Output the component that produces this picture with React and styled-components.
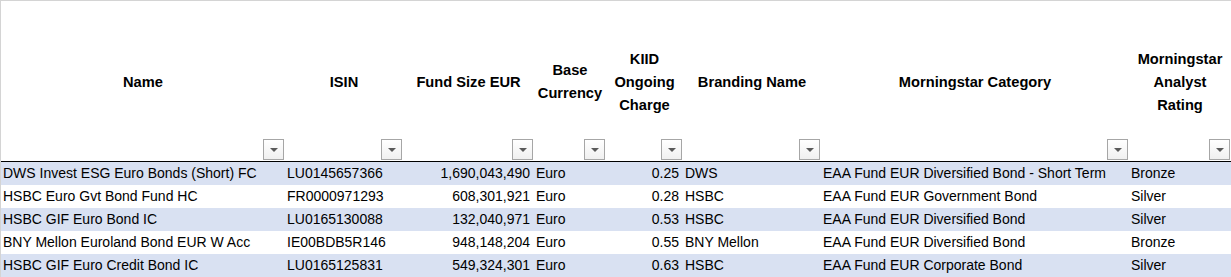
import React from "react";
import styled, { createGlobalStyle } from "styled-components";

const Global = createGlobalStyle`
  html, body { margin: 0; padding: 0; background: #ffffff; }
  body { font-family: "Liberation Sans", Arial, sans-serif; }
`;

const COLS = [
  { key: "name", title: ["Name"], width: 284, align: "left" },
  { key: "isin", title: ["ISIN"], width: 118, align: "left" },
  { key: "size", title: ["Fund Size EUR"], width: 131, align: "right" },
  { key: "cur", title: ["Base", "Currency"], width: 72, align: "left" },
  { key: "kiid", title: ["KIID", "Ongoing", "Charge"], width: 77, align: "right" },
  { key: "brand", title: ["Branding Name"], width: 138, align: "left" },
  { key: "cat", title: ["Morningstar Category"], width: 308, align: "left" },
  { key: "rating", title: ["Morningstar", "Analyst", "Rating"], width: 102, align: "left" },
];

const ROWS = [
  { name: "DWS Invest ESG Euro Bonds (Short) FC", isin: "LU0145657366", size: "1,690,043,490", cur: "Euro", kiid: "0.25", brand: "DWS", cat: "EAA Fund EUR Diversified Bond - Short Term", rating: "Bronze" },
  { name: "HSBC Euro Gvt Bond Fund HC", isin: "FR0000971293", size: "608,301,921", cur: "Euro", kiid: "0.28", brand: "HSBC", cat: "EAA Fund EUR Government Bond", rating: "Silver" },
  { name: "HSBC GIF Euro Bond IC", isin: "LU0165130088", size: "132,040,971", cur: "Euro", kiid: "0.53", brand: "HSBC", cat: "EAA Fund EUR Diversified Bond", rating: "Silver" },
  { name: "BNY Mellon Euroland Bond EUR W Acc", isin: "IE00BDB5R146", size: "948,148,204", cur: "Euro", kiid: "0.55", brand: "BNY Mellon", cat: "EAA Fund EUR Diversified Bond", rating: "Bronze" },
  { name: "HSBC GIF Euro Credit Bond IC", isin: "LU0165125831", size: "549,324,301", cur: "Euro", kiid: "0.63", brand: "HSBC", cat: "EAA Fund EUR Corporate Bond", rating: "Silver" },
];

const template = COLS.map((c) => `${c.width}px`).join(" ");

const Sheet = styled.div`
  width: 1231px;
  height: 277px;
  box-sizing: border-box;
  border-top: 1px solid #d4d4d4;
  border-left: 1px solid #d4d4d4;
  overflow: hidden;
  color: #000;
`;

const HeaderRow = styled.div`
  display: grid;
  grid-template-columns: ${template};
  height: 160px;
  border-bottom: 1px solid #000;
`;

const HeaderCell = styled.div`
  position: relative;
  display: flex;
  flex-direction: column;
  align-items: center;
  justify-content: center;
  font-weight: bold;
  font-size: 14.67px;
  line-height: 23px;
  text-align: center;
  padding-top: 2px;
  box-sizing: border-box;
`;

const FilterButton = styled.div`
  position: absolute;
  right: 1px;
  bottom: 1px;
  width: 21px;
  height: 21px;
  box-sizing: border-box;
  border: 1px solid #a6a6a6;
  background: linear-gradient(#ffffff, #f0f0f0);
  display: flex;
  align-items: center;
  justify-content: center;
`;

const Arrow = styled.span`
  width: 0;
  height: 0;
  border-left: 4px solid transparent;
  border-right: 4px solid transparent;
  border-top: 4px solid #5a5a5a;
  margin-top: 1px;
`;

const DataRow = styled.div`
  display: grid;
  grid-template-columns: ${template};
  height: 23px;
  background: ${(p) => (p.$band ? "#d9e1f2" : "#ffffff")};
`;

const DataCell = styled.div`
  font-size: 14px;
  line-height: 23px;
  white-space: nowrap;
  overflow: visible;
  text-align: ${(p) => p.$align};
  padding: ${(p) => (p.$align === "right" ? "0 4px 0 0" : "0 0 0 2px")};
`;

export default function App() {
  return (
    <>
      <Global />
      <Sheet>
        <HeaderRow>
          {COLS.map((c) => (
            <HeaderCell key={c.key}>
              {c.title.map((t) => (
                <span key={t}>{t}</span>
              ))}
              <FilterButton>
                <Arrow />
              </FilterButton>
            </HeaderCell>
          ))}
        </HeaderRow>
        {ROWS.map((r, i) => (
          <DataRow key={r.isin} $band={i % 2 === 0}>
            {COLS.map((c) => (
              <DataCell key={c.key} $align={c.align}>
                {r[c.key]}
              </DataCell>
            ))}
          </DataRow>
        ))}
      </Sheet>
    </>
  );
}
